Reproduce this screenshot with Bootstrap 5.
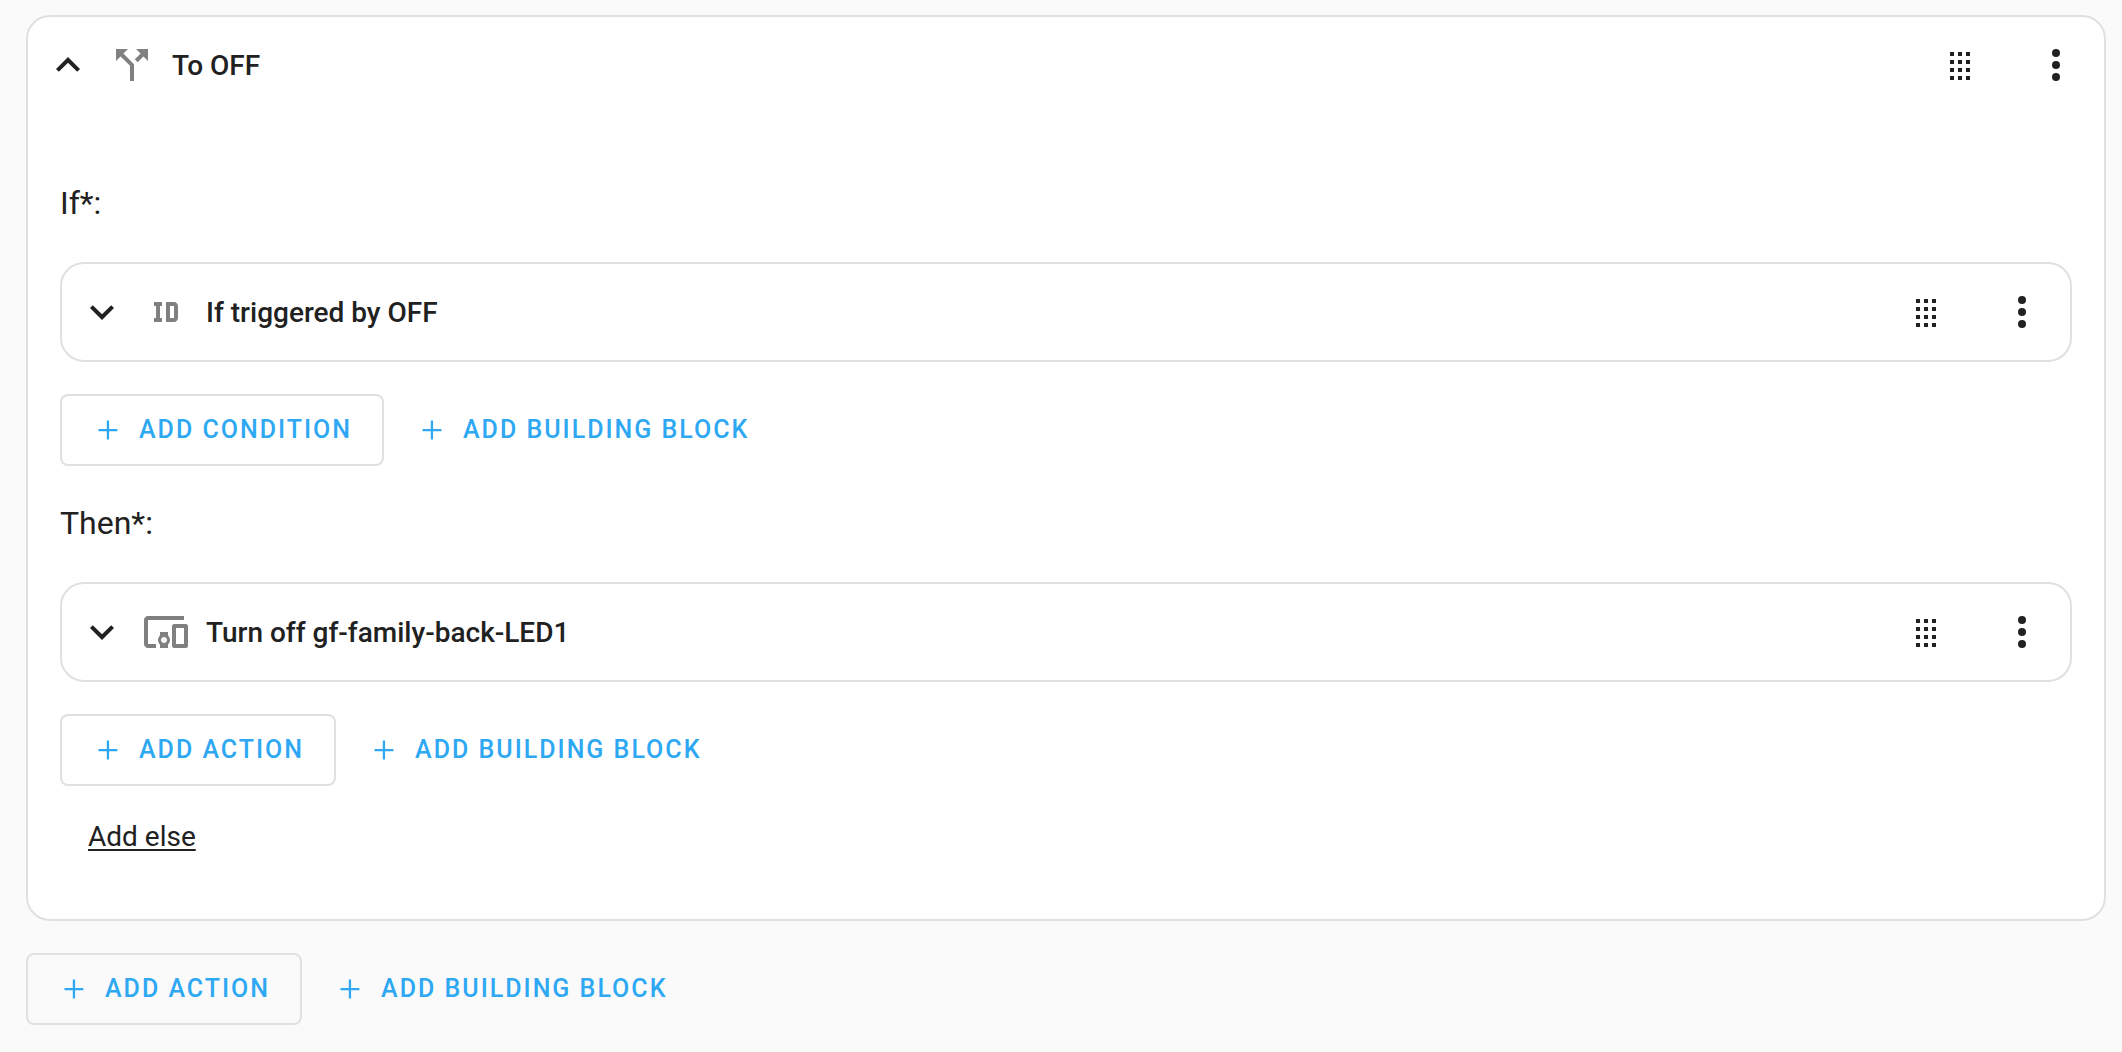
<!DOCTYPE html>
<html lang="en">
<head>
<meta charset="utf-8">
<meta name="viewport" content="width=device-width, initial-scale=1">
<title>Automation actions</title>
<link href="https://cdn.jsdelivr.net/npm/bootstrap@5.3.0/dist/css/bootstrap.min.css" rel="stylesheet">
<style>
  :root { --ink: #212121; --line: #e0e0e0; --accent: #2ea8f3; --muted-icon: #808080; }
  body { background: #fafafa; color: var(--ink); font-family: Roboto, "Liberation Sans", sans-serif; font-size: 28px; }
  .editor { padding: 15px 16px 27px 26px; }
  .panel { --bs-card-border-width: 2px; --bs-card-border-color: var(--line); --bs-card-border-radius: 24px; --bs-card-bg: #fff; color: var(--ink); }
  .panel-head { height: 96px; padding-left: 16px; gap: 16px; }
  .panel-body { padding: 33px 32px 62px; }
  .panel-title { font-size: 28px; font-weight: 500; line-height: 40px; margin: 0; padding-top: 2px; }
  .step-label { font-size: 32px; font-weight: 400; line-height: 40px; margin: 37px 0 39px; }
  .glyph { width: 48px; height: 48px; fill: currentColor; flex: none; display: block; }
  .glyph-kind { color: var(--muted-icon); }
  .glyph-plus { width: 32px; height: 32px; fill: currentColor; flex: none; }
  .tool { --bs-btn-color: var(--ink); --bs-btn-hover-color: var(--ink); --bs-btn-border-width: 0; padding: 24px; }
  .toggle { --bs-btn-color: var(--ink); --bs-btn-hover-color: var(--ink); --bs-btn-border-width: 0; padding: 0; }
  .actions { gap: 16px; margin-top: 32px; }
  .btn-add { --bs-btn-color: var(--accent); --bs-btn-hover-color: var(--accent); --bs-btn-border-width: 0; --bs-btn-border-radius: 8px;
    height: 72px; padding: 0 16px; gap: 15px; font-size: 25px; font-weight: 500; line-height: 32px; letter-spacing: 2px; text-transform: uppercase; }
  .btn-add-outlined { --bs-btn-border-width: 2px; --bs-btn-border-color: var(--line); --bs-btn-hover-border-color: var(--line); padding: 0 30px; }
  .btn-else { color: var(--ink); font-size: 28px; line-height: 40px; text-underline-offset: 3px; text-decoration-thickness: 2px; margin-top: 31px; padding: 0 28px; border: 0; }
</style>
<script src="https://cdn.jsdelivr.net/npm/bootstrap@5.3.0/dist/js/bootstrap.bundle.min.js"></script>
</head>
<body>
<svg class="d-none" aria-hidden="true">
  <symbol id="i-up" viewBox="0 0 24 24"><path d="M7.41,15.41L12,10.83L16.59,15.41L18,14L12,8L6,14L7.41,15.41Z"/></symbol>
  <symbol id="i-down" viewBox="0 0 24 24"><path d="M7.41,8.58L12,13.17L16.59,8.58L18,10L12,16L6,10L7.41,8.58Z"/></symbol>
  <symbol id="i-split" viewBox="0 0 24 24"><path d="M14,4L16.29,6.29L13.41,9.17L14.83,10.59L17.71,7.71L20,10V4M10,4H4V10L6.29,7.71L11,12.41V20H13V11.59L7.71,6.29"/></symbol>
  <symbol id="i-id" viewBox="0 0 24 24"><path d="M10 7V9H9V15H10V17H6V15H7V9H6V7H10M16 7C17.11 7 18 7.9 18 9V15C18 16.11 17.11 17 16 17H12V7M16 9H14V15H16V9Z"/></symbol>
  <symbol id="i-devices" viewBox="0 0 24 24"><path d="M3 6H21V4H3C1.9 4 1 4.9 1 6V18C1 19.1 1.9 20 3 20H7V18H3V6M13 12H9V13.78C8.39 14.33 8 15.11 8 16C8 16.89 8.39 17.67 9 18.22V20H13V18.22C13.61 17.67 14 16.88 14 16S13.61 14.33 13 13.78V12M11 17.5C10.17 17.5 9.5 16.83 9.5 16S10.17 14.5 11 14.5 12.5 15.17 12.5 16 11.83 17.5 11 17.5M22 8H16C15.5 8 15 8.5 15 9V19C15 19.5 15.5 20 16 20H22C22.5 20 23 19.5 23 19V9C23 8.5 22.5 8 22 8M21 18H17V10H21V18Z"/></symbol>
  <symbol id="i-grip" viewBox="0 0 24 24"><path d="M7 5.5h2v2h-2zM11 5.5h2v2h-2zM15 5.5h2v2h-2zM7 9.5h2v2h-2zM11 9.5h2v2h-2zM15 9.5h2v2h-2zM7 13.5h2v2h-2zM11 13.5h2v2h-2zM15 13.5h2v2h-2zM7 17.5h2v2h-2zM11 17.5h2v2h-2zM15 17.5h2v2h-2z"/></symbol>
  <symbol id="i-more" viewBox="0 0 24 24"><circle cx="12" cy="6" r="2"/><circle cx="12" cy="12" r="2"/><circle cx="12" cy="18" r="2"/></symbol>
  <symbol id="i-plus" viewBox="0 0 32 32"><path d="M14.8 6.6h2.3v8.3h8.3v2.3h-8.3v8.3h-2.3v-8.3H6.5v-2.3h8.3z"/></symbol>
</svg>

<main class="editor">
  <section class="card panel">
    <header class="panel-head d-flex align-items-center">
      <button type="button" class="btn toggle" aria-label="Collapse"><svg class="glyph"><use href="#i-up"/></svg></button>
      <svg class="glyph glyph-kind" aria-hidden="true"><use href="#i-split"/></svg>
      <h2 class="panel-title">To OFF</h2>
      <div class="d-flex ms-auto">
        <button type="button" class="btn tool" aria-label="Move"><svg class="glyph"><use href="#i-grip"/></svg></button>
        <button type="button" class="btn tool" aria-label="More options"><svg class="glyph"><use href="#i-more"/></svg></button>
      </div>
    </header>

    <div class="panel-body">
      <h3 class="step-label">If*:</h3>
      <section class="card panel">
        <header class="panel-head d-flex align-items-center">
          <button type="button" class="btn toggle" aria-label="Expand"><svg class="glyph"><use href="#i-down"/></svg></button>
          <svg class="glyph glyph-kind" aria-hidden="true"><use href="#i-id"/></svg>
          <h4 class="panel-title">If triggered by OFF</h4>
          <div class="d-flex ms-auto">
            <button type="button" class="btn tool" aria-label="Move"><svg class="glyph"><use href="#i-grip"/></svg></button>
            <button type="button" class="btn tool" aria-label="More options"><svg class="glyph"><use href="#i-more"/></svg></button>
          </div>
        </header>
      </section>
      <div class="actions d-flex flex-wrap">
        <button type="button" class="btn btn-add btn-add-outlined d-inline-flex align-items-center"><svg class="glyph-plus"><use href="#i-plus"/></svg>Add condition</button>
        <button type="button" class="btn btn-add d-inline-flex align-items-center"><svg class="glyph-plus"><use href="#i-plus"/></svg>Add building block</button>
      </div>

      <h3 class="step-label">Then*:</h3>
      <section class="card panel">
        <header class="panel-head d-flex align-items-center">
          <button type="button" class="btn toggle" aria-label="Expand"><svg class="glyph"><use href="#i-down"/></svg></button>
          <svg class="glyph glyph-kind" aria-hidden="true"><use href="#i-devices"/></svg>
          <h4 class="panel-title">Turn off gf-family-back-LED1</h4>
          <div class="d-flex ms-auto">
            <button type="button" class="btn tool" aria-label="Move"><svg class="glyph"><use href="#i-grip"/></svg></button>
            <button type="button" class="btn tool" aria-label="More options"><svg class="glyph"><use href="#i-more"/></svg></button>
          </div>
        </header>
      </section>
      <div class="actions d-flex flex-wrap">
        <button type="button" class="btn btn-add btn-add-outlined d-inline-flex align-items-center"><svg class="glyph-plus"><use href="#i-plus"/></svg>Add action</button>
        <button type="button" class="btn btn-add d-inline-flex align-items-center"><svg class="glyph-plus"><use href="#i-plus"/></svg>Add building block</button>
      </div>
      <button type="button" class="btn btn-else text-decoration-underline">Add else</button>
    </div>
  </section>

  <div class="actions d-flex flex-wrap">
    <button type="button" class="btn btn-add btn-add-outlined d-inline-flex align-items-center"><svg class="glyph-plus"><use href="#i-plus"/></svg>Add action</button>
    <button type="button" class="btn btn-add d-inline-flex align-items-center"><svg class="glyph-plus"><use href="#i-plus"/></svg>Add building block</button>
  </div>
</main>
</body>
</html>
